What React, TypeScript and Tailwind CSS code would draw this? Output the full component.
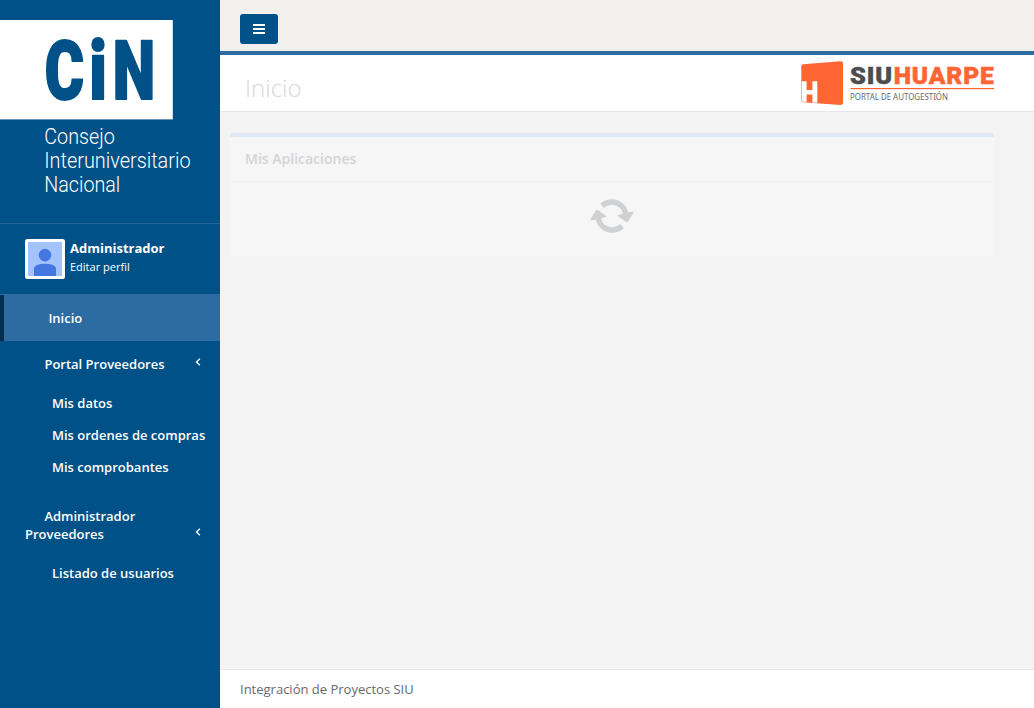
function CinLogo() {
  return (
    <svg width="220" height="223" viewBox="0 0 220 223" className="block shrink-0">
      <rect x="0" y="20" width="172.8" height="99.4" fill="#fff" />
      <text fill="#005187" stroke="#005187" strokeWidth="2" strokeLinejoin="round" fontFamily="Roboto, sans-serif" fontWeight="900" fontSize="81">
        <tspan x="44.7" y="98.8" textLength="39.3" lengthAdjust="spacingAndGlyphs">C</tspan>
        <tspan x="89.2" y="98.8" textLength="17.6" lengthAdjust="spacingAndGlyphs">i</tspan>
        <tspan x="112.8" y="98.8" textLength="42.4" lengthAdjust="spacingAndGlyphs">N</tspan>
      </text>
      <text fill="#fff" fontFamily="Roboto, sans-serif" fontWeight="300" fontSize="22.6">
        <tspan x="44.3" y="144.4" textLength="70.5" lengthAdjust="spacingAndGlyphs">Consejo</tspan>
        <tspan x="44.3" y="168.4" textLength="146.3" lengthAdjust="spacingAndGlyphs">Interuniversitario</tspan>
        <tspan x="44.3" y="192.4" textLength="76" lengthAdjust="spacingAndGlyphs">Nacional</tspan>
      </text>
    </svg>
  );
}

function HuarpeLogo() {
  return (
    <svg width="200" height="48" viewBox="798 58 200 48" className="block">
      <path d="M803 64.3Q801.3 64.5 801.3 66.3V100.4Q801.3 102 803 102.2L840.5 104.9Q843 105 843 102.8V63Q843 61 840.8 61.2Z" fill="#ff6634" />
      <path d="M801.7 81.2H806.6V90H812.4V81.2H817.3V102.7L812.4 102.4V94.6H806.6V102L803 101.7Q801.7 101.6 801.7 100.3Z" fill="#fff" />
      <text fontFamily="Roboto, sans-serif" fontWeight="900" fontSize="23.4" letterSpacing="0.8" strokeWidth="0.5">
        <tspan x="850" y="83.5" fill="#4d4d4f" stroke="#4d4d4f" textLength="43" lengthAdjust="spacingAndGlyphs">SIU</tspan>
        <tspan x="893.7" y="83.5" fill="#ff6634" stroke="#ff6634" textLength="101" lengthAdjust="spacingAndGlyphs">HUARPE</tspan>
      </text>
      <rect x="850.5" y="88" width="143.5" height="1.2" fill="#ff6634" />
      <text x="850" y="99.8" fill="#68686a" fontFamily="'Noto Sans', sans-serif" fontSize="8.8" textLength="98" lengthAdjust="spacingAndGlyphs">PORTAL DE AUTOGESTIÓN</text>
    </svg>
  );
}

function Chevron() {
  return (
    <svg width="6" height="8" viewBox="0 0 6 8" className="block" fill="none" stroke="#fff" strokeWidth="1.3">
      <path d="M4.9 0.8L1.5 4L4.9 7.2" />
    </svg>
  );
}

function Refresh() {
  return (
    <svg width="46" height="38" viewBox="-23 -19 46 38" className="block" fill="#cfd1d2">
      <g fill="none" stroke="#cfd1d2" strokeWidth="5.6">
        <path d="M-10 -10.1A14.2 14.2 0 0 1 14 0" />
        <path d="M10 10.1A14.2 14.2 0 0 1 -14 0" />
      </g>
      <path d="M5.8 0Q4.8-.7 6-1.1L20.6-4.4Q22.2-4.6 21.4-3.2L16.1 5.5Q15.3 6.7 14.2 5.9Z" />
      <path d="M-5.8 0Q-4.8.7-6 1.1L-20.6 4.4Q-22.2 4.6-21.4 3.2L-16.1-5.5Q-15.3-6.7-14.2-5.9Z" />
    </svg>
  );
}

export default function App() {
  return (
    <div className="flex h-[708px] w-full overflow-hidden bg-[#f3f3f3] font-['Open_Sans',sans-serif] text-[13px] text-[#676a6c]">
      <aside className="flex w-[220px] shrink-0 flex-col bg-[#005187] font-semibold leading-[18px] text-white">
        <CinLogo />
        <div className="flex h-[71px] gap-[5px] border-t border-[#226699] pl-[25px] pt-[15px]">
          <svg width="40" height="40" viewBox="0 0 40 40" className="block">
            <rect width="40" height="40" rx="2.5" fill="#fff" />
            <rect x="3" y="3" width="34" height="34" fill="#a3c3ff" />
            <circle cx="20" cy="16.1" r="6.3" fill="#4577e3" />
            <path d="M9 37V29Q11 24.8 20 24.8T31 29V37Z" fill="#4577e3" />
          </svg>
          <div className="flex flex-col">
            <span className="text-[13px] font-bold">Administrador</span>
            <span className="text-[11px] font-normal leading-5">Editar perfil</span>
          </div>
        </div>
        <nav className="flex flex-col">
          <div className="border-t border-[#2d6ca2]">
            <a className="flex h-[46px] items-center border-l-4 border-[#042d4e] bg-[#2d6ca2] pl-[44.4px]">Inicio</a>
          </div>
          <div className="flex h-[46px] items-start justify-between pl-[44.4px] pr-[19px] pt-[14px]">
            <span>Portal Proveedores</span>
            <span className="pt-[3px]"><Chevron /></span>
          </div>
          <div className="flex h-[106px] flex-col pl-[52px] pt-[7px]">
            <a className="h-8">Mis datos</a>
            <a className="h-8 whitespace-nowrap">Mis ordenes de compras</a>
            <a className="h-8">Mis comprobantes</a>
          </div>
          <div className="flex h-[64px] items-start justify-between pl-[25px] pr-[19px] pt-[14px]">
            <span className="flex flex-col"><span className="pl-[19.4px]">Administrador</span><span>Proveedores</span></span>
            <span className="pt-[21px]"><Chevron /></span>
          </div>
          <a className="pl-[52px] pt-[7px]">Listado de usuarios</a>
        </nav>
      </aside>
      <main className="flex min-w-0 grow flex-col">
        <header className="h-[55px] shrink-0 border-b-4 border-[#2d6ca2] bg-[#f1f0ec] pl-5 pt-[14px]">
          <button className="flex h-[30px] w-[38px] items-center justify-center rounded-[3px] bg-[#005187]">
            <svg width="12" height="10" viewBox="0 0 12 10" fill="#fff"><path d="M0 0h12v2H0zM0 4h12v2H0zM0 8h12v2H0z" /></svg>
          </button>
        </header>
        <div className="flex h-[57px] shrink-0 items-start justify-between border-b border-[#e7e7e7] bg-white pl-[25px] pr-9 pt-[3px]">
          <h1 className="pt-[13px] text-2xl font-light leading-[33px] text-[#d8d8d8]">Inicio</h1>
          <HuarpeLogo />
        </div>
        <section className="ml-[10px] mr-10 mt-[21px] h-[123px] shrink-0 border-t-4 border-[#dfe9f3] bg-[#f6f6f6]">
          <h2 className="h-[45px] border-b border-[#f1f1f1] pl-[15px] pt-3 text-[14px] font-semibold leading-5 text-[#d3d4d4]">Mis Aplicaciones</h2>
          <div className="flex justify-center pt-[15px]"><Refresh /></div>
        </section>
        <footer className="mt-auto h-[39px] border-t border-[#e7e7e7] bg-white pl-5 pt-[10px] leading-[19px]">Integración de Proyectos SIU</footer>
      </main>
    </div>
  );
}
